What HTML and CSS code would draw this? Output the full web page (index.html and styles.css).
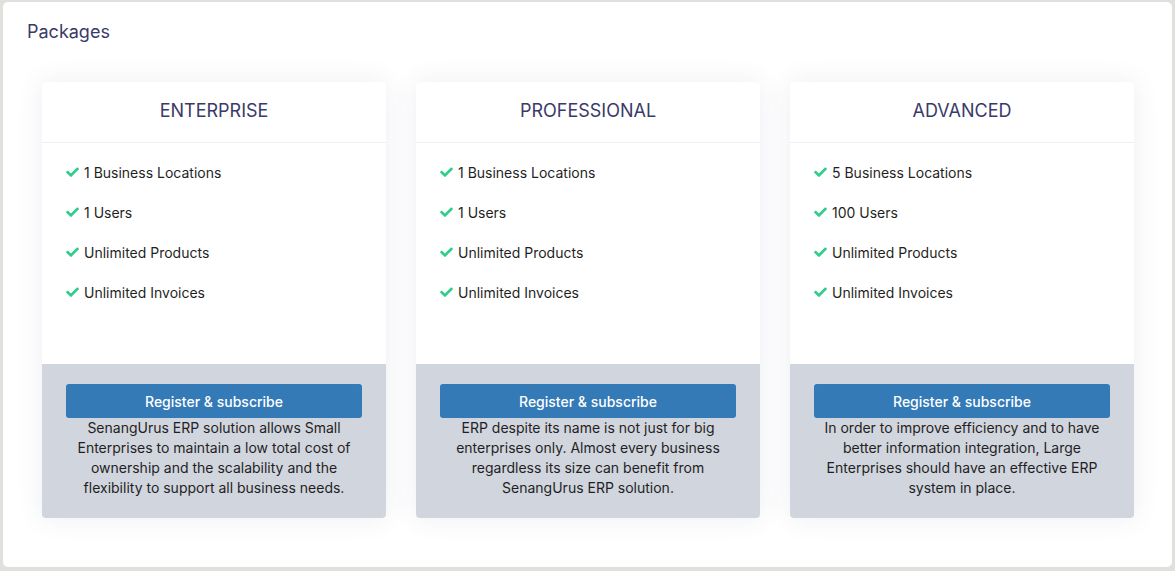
FILE: index.html
```html
<!DOCTYPE html>
<html>
<head>
<meta charset="utf-8">
<link rel="stylesheet" href="styles.css">
</head>
<body>
<div class="panel">
  <h2 class="panel-title">Packages</h2>
  <div class="grid">
    <div class="card">
      <div class="card-head">ENTERPRISE</div>
      <ul class="features">
        <li><svg class="chk" viewBox="0 0 512 400"><path d="M173.9 391.4l-166.4-166.4c-10-10-10-26.2 0-36.2l36.2-36.2c10-10 26.2-10 36.2 0L192 264.7 432.1 24.6c10-10 26.2-10 36.2 0l36.2 36.2c10 10 10 26.2 0 36.2l-294.4 294.4c-10 10-26.2 10-36.2 0z"/></svg>1 Business Locations</li>
        <li><svg class="chk" viewBox="0 0 512 400"><path d="M173.9 391.4l-166.4-166.4c-10-10-10-26.2 0-36.2l36.2-36.2c10-10 26.2-10 36.2 0L192 264.7 432.1 24.6c10-10 26.2-10 36.2 0l36.2 36.2c10 10 10 26.2 0 36.2l-294.4 294.4c-10 10-26.2 10-36.2 0z"/></svg>1 Users</li>
        <li><svg class="chk" viewBox="0 0 512 400"><path d="M173.9 391.4l-166.4-166.4c-10-10-10-26.2 0-36.2l36.2-36.2c10-10 26.2-10 36.2 0L192 264.7 432.1 24.6c10-10 26.2-10 36.2 0l36.2 36.2c10 10 10 26.2 0 36.2l-294.4 294.4c-10 10-26.2 10-36.2 0z"/></svg>Unlimited Products</li>
        <li><svg class="chk" viewBox="0 0 512 400"><path d="M173.9 391.4l-166.4-166.4c-10-10-10-26.2 0-36.2l36.2-36.2c10-10 26.2-10 36.2 0L192 264.7 432.1 24.6c10-10 26.2-10 36.2 0l36.2 36.2c10 10 10 26.2 0 36.2l-294.4 294.4c-10 10-26.2 10-36.2 0z"/></svg>Unlimited Invoices</li>
      </ul>
      <div class="card-foot">
        <button class="btn">Register &amp; subscribe</button>
        <p class="desc">SenangUrus ERP solution allows Small Enterprises to maintain a low total cost of ownership and the scalability and the flexibility to support all business needs.</p>
      </div>
    </div>
    <div class="card">
      <div class="card-head">PROFESSIONAL</div>
      <ul class="features">
        <li><svg class="chk" viewBox="0 0 512 400"><path d="M173.9 391.4l-166.4-166.4c-10-10-10-26.2 0-36.2l36.2-36.2c10-10 26.2-10 36.2 0L192 264.7 432.1 24.6c10-10 26.2-10 36.2 0l36.2 36.2c10 10 10 26.2 0 36.2l-294.4 294.4c-10 10-26.2 10-36.2 0z"/></svg>1 Business Locations</li>
        <li><svg class="chk" viewBox="0 0 512 400"><path d="M173.9 391.4l-166.4-166.4c-10-10-10-26.2 0-36.2l36.2-36.2c10-10 26.2-10 36.2 0L192 264.7 432.1 24.6c10-10 26.2-10 36.2 0l36.2 36.2c10 10 10 26.2 0 36.2l-294.4 294.4c-10 10-26.2 10-36.2 0z"/></svg>1 Users</li>
        <li><svg class="chk" viewBox="0 0 512 400"><path d="M173.9 391.4l-166.4-166.4c-10-10-10-26.2 0-36.2l36.2-36.2c10-10 26.2-10 36.2 0L192 264.7 432.1 24.6c10-10 26.2-10 36.2 0l36.2 36.2c10 10 10 26.2 0 36.2l-294.4 294.4c-10 10-26.2 10-36.2 0z"/></svg>Unlimited Products</li>
        <li><svg class="chk" viewBox="0 0 512 400"><path d="M173.9 391.4l-166.4-166.4c-10-10-10-26.2 0-36.2l36.2-36.2c10-10 26.2-10 36.2 0L192 264.7 432.1 24.6c10-10 26.2-10 36.2 0l36.2 36.2c10 10 10 26.2 0 36.2l-294.4 294.4c-10 10-26.2 10-36.2 0z"/></svg>Unlimited Invoices</li>
      </ul>
      <div class="card-foot">
        <button class="btn">Register &amp; subscribe</button>
        <p class="desc">ERP despite its name is not just for big enterprises only. Almost every business regardless its size can benefit from SenangUrus ERP solution.</p>
      </div>
    </div>
    <div class="card">
      <div class="card-head">ADVANCED</div>
      <ul class="features">
        <li><svg class="chk" viewBox="0 0 512 400"><path d="M173.9 391.4l-166.4-166.4c-10-10-10-26.2 0-36.2l36.2-36.2c10-10 26.2-10 36.2 0L192 264.7 432.1 24.6c10-10 26.2-10 36.2 0l36.2 36.2c10 10 10 26.2 0 36.2l-294.4 294.4c-10 10-26.2 10-36.2 0z"/></svg>5 Business Locations</li>
        <li><svg class="chk" viewBox="0 0 512 400"><path d="M173.9 391.4l-166.4-166.4c-10-10-10-26.2 0-36.2l36.2-36.2c10-10 26.2-10 36.2 0L192 264.7 432.1 24.6c10-10 26.2-10 36.2 0l36.2 36.2c10 10 10 26.2 0 36.2l-294.4 294.4c-10 10-26.2 10-36.2 0z"/></svg>100 Users</li>
        <li><svg class="chk" viewBox="0 0 512 400"><path d="M173.9 391.4l-166.4-166.4c-10-10-10-26.2 0-36.2l36.2-36.2c10-10 26.2-10 36.2 0L192 264.7 432.1 24.6c10-10 26.2-10 36.2 0l36.2 36.2c10 10 10 26.2 0 36.2l-294.4 294.4c-10 10-26.2 10-36.2 0z"/></svg>Unlimited Products</li>
        <li><svg class="chk" viewBox="0 0 512 400"><path d="M173.9 391.4l-166.4-166.4c-10-10-10-26.2 0-36.2l36.2-36.2c10-10 26.2-10 36.2 0L192 264.7 432.1 24.6c10-10 26.2-10 36.2 0l36.2 36.2c10 10 10 26.2 0 36.2l-294.4 294.4c-10 10-26.2 10-36.2 0z"/></svg>Unlimited Invoices</li>
      </ul>
      <div class="card-foot">
        <button class="btn">Register &amp; subscribe</button>
        <p class="desc">In order to improve efficiency and to have better information integration, Large Enterprises should have an effective ERP system in place.</p>
      </div>
    </div>
  </div>
</div>
</body>
</html>
```

FILE: styles.css
```css
* { box-sizing: border-box; }
html, body { margin: 0; padding: 0; }
body {
  background: #dfe2dc;
  font-family: Inter, "Noto Sans", sans-serif;
  padding: 2px 3px 4px 3px;
}
.panel {
  background: #fff;
  border-radius: 5px;
  height: 565px;
  padding: 18px 39px 0 39px;
}
.panel-title {
  margin: 0 0 0 -15px;
  font-size: 18px;
  font-weight: 400;
  color: #3a3a68;
  line-height: 24px;
}
.grid {
  margin-top: 38px;
  display: grid;
  grid-template-columns: repeat(3, 344px);
  column-gap: 30px;
}
.card {
  background: #fff;
  border-radius: 4px;
  box-shadow: 0 0 28px rgba(60, 70, 110, 0.09);
  display: flex;
  flex-direction: column;
  height: 436px;
  overflow: hidden;
}
.card-head {
  height: 61px;
  border-bottom: 1px solid #eef0f3;
  text-align: center;
  font-size: 18px;
  color: #3a3a68;
  line-height: 24px;
  padding-top: 17px;
}
.features {
  list-style: none;
  margin: 0;
  padding: 19px 24px 0 24px;
  height: 221px;
}
.features li {
  display: flex;
  align-items: center;
  height: 20px;
  margin-bottom: 20px;
  font-size: 14px;
  color: #1f1f24;
}
.chk {
  width: 13px;
  height: 10px;
  fill: #2dce89;
  margin-right: 5px;
  flex: none;
}
.card-foot {
  flex: 1;
  background: #d1d5de;
  padding: 20px 24px 0 24px;
  text-align: center;
}
.btn {
  display: block;
  width: 100%;
  height: 34px;
  border: none;
  border-radius: 3px;
  background: #337ab7;
  color: #fff;
  font-family: Inter, "Noto Sans", sans-serif;
  font-size: 14px;
  font-weight: 500;
  cursor: pointer;
}
.desc {
  margin: 0;
  font-size: 14px;
  line-height: 20px;
  color: #1f1f24;
}
```
